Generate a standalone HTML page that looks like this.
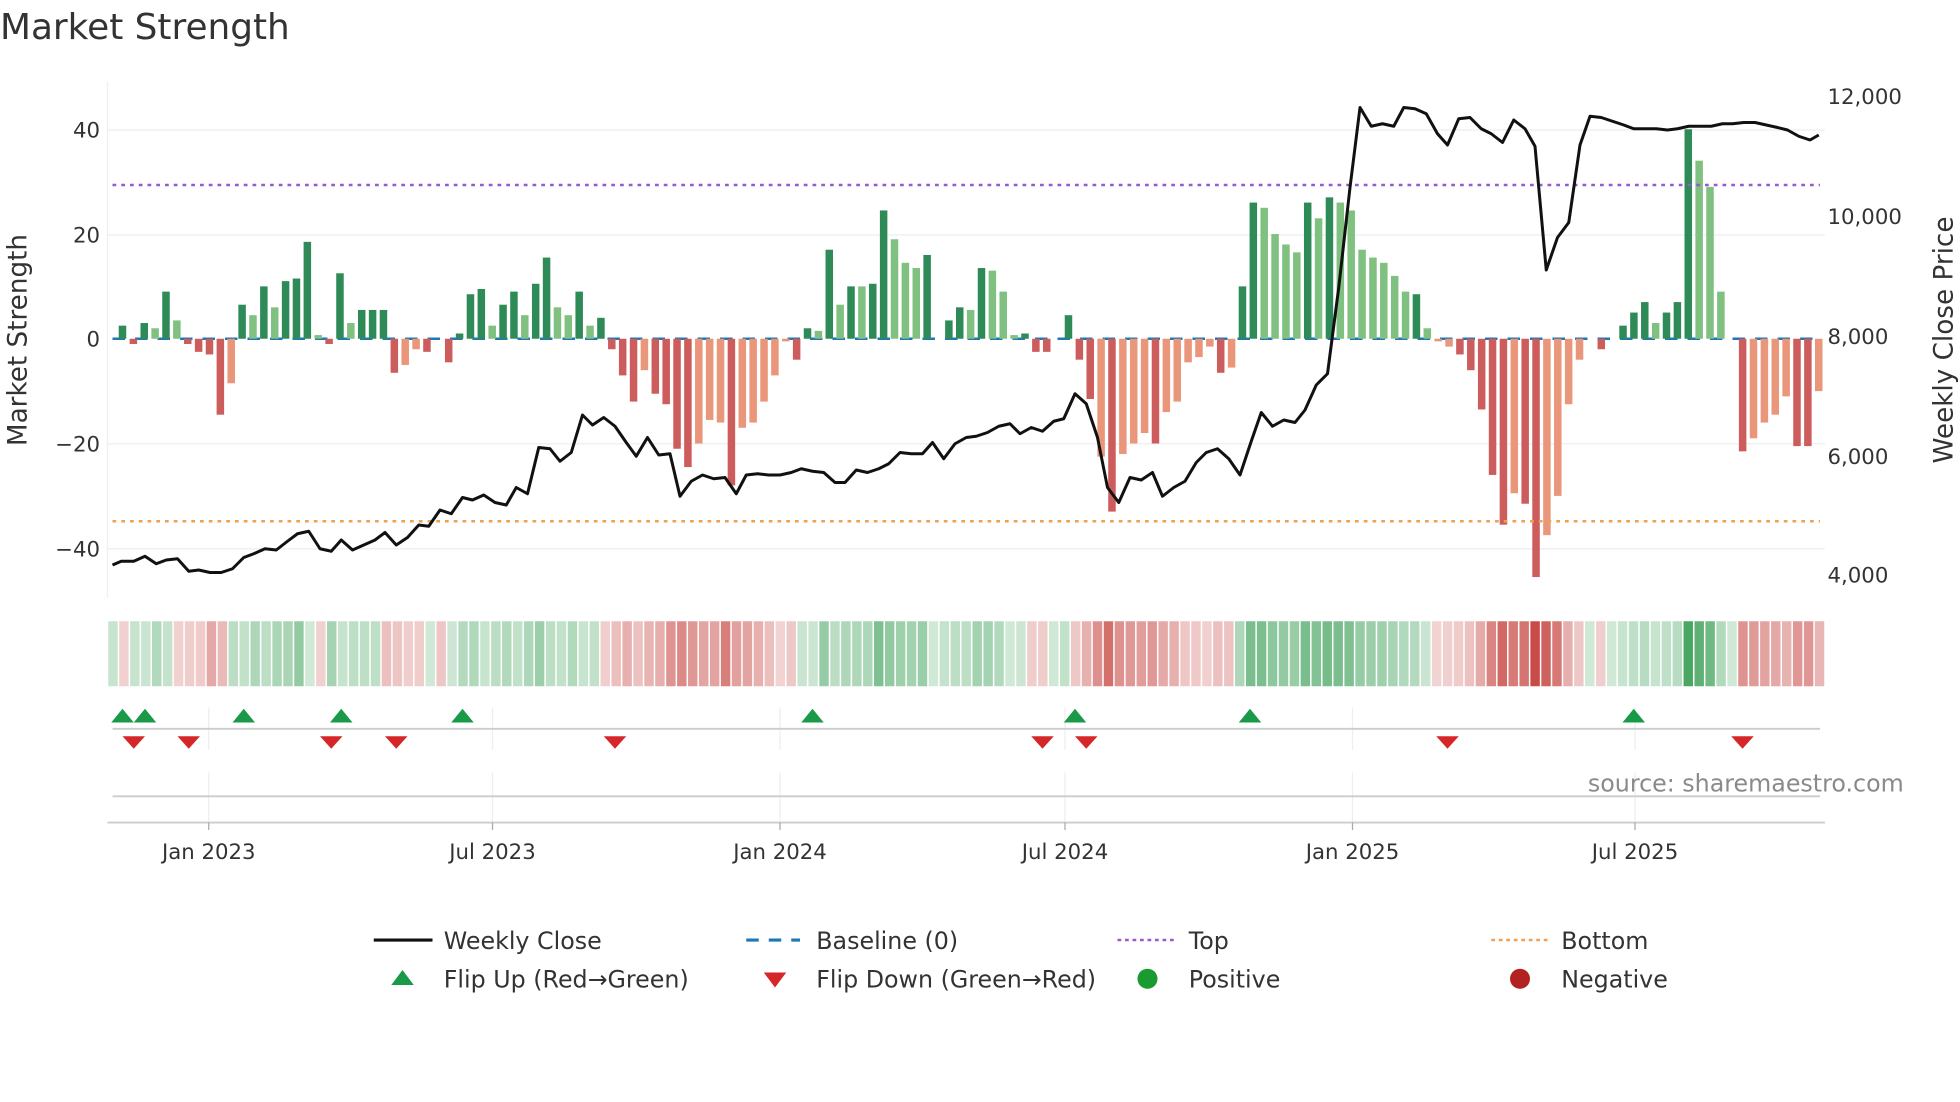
<!DOCTYPE html>
<html><head><meta charset="utf-8"><style>
html,body{margin:0;padding:0;background:#fff;width:1960px;height:1102px;overflow:hidden}
svg{display:block}
text{font-family:"DejaVu Sans","Liberation Sans",sans-serif;fill:#333}
</style></head><body>
<svg id="s" width="1960" height="1102" viewBox="0 0 1568 881.6" xmlns="http://www.w3.org/2000/svg">
<text x="0" y="31" font-size="28.7" fill="#333">Market Strength</text>
<g id="grid" stroke="#eceef2" stroke-width="1">
<line x1="86" x2="1460" y1="104" y2="104"/><line x1="86" x2="1460" y1="188" y2="188"/>
<line x1="86" x2="1460" y1="355" y2="355"/><line x1="86" x2="1460" y1="439" y2="439"/>
</g>
<line x1="86" x2="86" y1="65" y2="478" stroke="#f0f0f0"/>
<g id="bars"></g>
<line x1="90" x2="1456" y1="148" y2="148" stroke="#9b59d0" stroke-width="2" stroke-dasharray="3,4"/>
<line x1="90" x2="1456" y1="417" y2="417" stroke="#f0a050" stroke-width="2" stroke-dasharray="3,4"/>
<polyline id="price" fill="none" stroke="#111" stroke-width="2.4" stroke-linejoin="round"/>
<g font-size="17" text-anchor="end">
<text x="80" y="110">40</text><text x="80" y="194">20</text><text x="80" y="277">0</text>
<text x="80" y="361">−20</text><text x="80" y="445">−40</text>
</g>
<g font-size="17">
<text x="1462" y="83">12,000</text><text x="1462" y="179">10,000</text><text x="1462" y="275">8,000</text>
<text x="1462" y="371">6,000</text><text x="1462" y="466">4,000</text>
</g>
<text transform="translate(21,272) rotate(-90)" font-size="21" text-anchor="middle">Market Strength</text>
<text transform="translate(1562,272) rotate(-90)" font-size="21" text-anchor="middle">Weekly Close Price</text>
<g id="heat"></g>
<g stroke="#eceef2">
<line x1="167" x2="167" y1="566" y2="600"/><line x1="394" x2="394" y1="566" y2="600"/><line x1="624" x2="624" y1="566" y2="600"/><line x1="852" x2="852" y1="566" y2="600"/><line x1="1082" x2="1082" y1="566" y2="600"/><line x1="1308" x2="1308" y1="566" y2="600"/>
<line x1="167" x2="167" y1="618" y2="658"/><line x1="394" x2="394" y1="618" y2="658"/><line x1="624" x2="624" y1="618" y2="658"/><line x1="852" x2="852" y1="618" y2="658"/><line x1="1082" x2="1082" y1="618" y2="658"/><line x1="1308" x2="1308" y1="618" y2="658"/>
</g>
<line x1="90" x2="1456" y1="583" y2="583" stroke="#ccc" stroke-width="1.5"/>
<line x1="90" x2="1456" y1="637" y2="637" stroke="#ccc" stroke-width="1.5"/>
<line x1="86" x2="1460" y1="658" y2="658" stroke="#ccc" stroke-width="1.5"/>
<g stroke="#aaa"><line x1="167" x2="167" y1="658" y2="664"/><line x1="394" x2="394" y1="658" y2="664"/><line x1="624" x2="624" y1="658" y2="664"/><line x1="852" x2="852" y1="658" y2="664"/><line x1="1082" x2="1082" y1="658" y2="664"/><line x1="1308" x2="1308" y1="658" y2="664"/></g>
<g id="marks"></g>
<text x="1523" y="633" font-size="19" fill="#8a8a8a" text-anchor="end" style="fill:#8a8a8a">source: sharemaestro.com</text>
<g font-size="17" text-anchor="middle">
<text x="167" y="687">Jan 2023</text><text x="394" y="687">Jul 2023</text><text x="624" y="687">Jan 2024</text>
<text x="852" y="687">Jul 2024</text><text x="1082" y="687">Jan 2025</text><text x="1308" y="687">Jul 2025</text>
</g>
<g font-size="19">
<line x1="299" x2="346" y1="752" y2="752" stroke="#111" stroke-width="2.5"/><text x="355" y="759">Weekly Close</text>
<line x1="597" x2="640" y1="752" y2="752" stroke="#1f77b4" stroke-width="2.5" stroke-dasharray="10,8"/><text x="653" y="759">Baseline (0)</text>
<line x1="894" x2="940" y1="752" y2="752" stroke="#9b59d0" stroke-width="2" stroke-dasharray="3,3"/><text x="951" y="759">Top</text>
<line x1="1193" x2="1238" y1="752" y2="752" stroke="#f0a050" stroke-width="2" stroke-dasharray="3,3"/><text x="1249" y="759">Bottom</text>
<polygon points="313,788 331,788 322,776" fill="#1a9a48"/><text x="355" y="790">Flip Up (Red→Green)</text>
<polygon points="611,778 629,778 620,790" fill="#d62728"/><text x="653" y="790">Flip Down (Green→Red)</text>
<circle cx="918" cy="783" r="8" fill="#1a9a30"/><text x="951" y="790">Positive</text>
<circle cx="1216" cy="783" r="8" fill="#b22222"/><text x="1249" y="790">Negative</text>
</g>
</svg>
<script>
var NS="http://www.w3.org/2000/svg";
function el(t,a,p){var e=document.createElementNS(NS,t);for(var k in a)e.setAttribute(k,a[k]);p.appendChild(e);return e;}
var raw="2.5d,-1d,3d,2l,9d,3.5l,-1d,-2.5d,-3d,-14.5d,-8.5l,6.5d,4.5l,10d,6l,11d,11.5d,18.5d,0.7l,-1d,12.5d,3l,5.5d,5.5d,5.5d,-6.5d,-5l,-2l,-2.5d,0d,-4.5d,1d,8.5d,9.5d,2.5l,6.5d,9d,4.5l,10.5d,15.5d,6l,4.5l,9d,2.5l,4d,-2d,-7d,-12d,-6l,-10.5d,-12.5d,-21d,-24.5d,-20l,-15.5l,-16l,-28d,-17l,-16l,-12l,-7l,-0.5l,-4d,2d,1.5l,17d,6.5l,10d,10l,10.5d,24.5d,19l,14.5l,13.5l,16d,0d,3.5d,6d,5.5l,13.5d,13l,9l,0.7l,1d,-2.5d,-2.5d,0d,4.5d,-4d,-11.5d,-22.5l,-33d,-22l,-20l,-18l,-20d,-14l,-12l,-4.5l,-3.5l,-1.5l,-6.5d,-5.5l,10d,26d,25l,20l,18l,16.5l,26d,23l,27d,26l,24.5l,17l,15.5l,14.5l,12l,9l,8.5d,2l,-0.5l,-1.5l,-3d,-6d,-13.5d,-26d,-35.5d,-29.5l,-31.5d,-45.5d,-37.5l,-30l,-12.5l,-4l,0d,-2d,0d,2.5d,5d,7d,3l,5d,7d,40d,34l,29l,9l,0d,-21.5d,-19l,-16l,-14.5l,-11l,-20.5d,-20.5d,-10l".split(",");
var n=raw.length,x0=98,x1=1455,dx=(x1-x0)/(n-1),y0=271,k=4.19;
var hw=(1460-86)/n;
var bars=document.getElementById("bars"),heat=document.getElementById("heat");
el("line",{x1:90,x2:1456,y1:y0,y2:y0,stroke:"#1f77b4","stroke-width":2,"stroke-dasharray":"10,8"},bars);
for(var i=0;i<n;i++){var v=parseFloat(raw[i]),d=raw[i].slice(-1)=="d",x=x0+i*dx;
 var c=v>=0?(d?"#2e8b57":"#80c080"):(d?"#cd5c5c":"#e9967a");
 if(Math.abs(v)>0.2){var h=Math.abs(v)*k;el("rect",{x:x-3,y:v>=0?y0-h:y0,width:6,height:h,fill:c},bars);}
 var a=0.22+0.7*Math.min(Math.abs(v)/45,1);
 var hc=v>=0?"rgba(40,150,70,"+a+")":"rgba(195,60,55,"+a+")";
 if(v>=0&&Math.abs(v)<1)hc="rgba(40,150,70,0.22)";
 el("rect",{x:86+i*hw+0.6,y:497,width:hw-1.2,height:52,fill:hc},heat);}
var P=[90,452,97,449,107,449,116,445,125,451,133,448,142,447,151,457,159,456,168,458,177,458,186,455,195,446,203,443,212,439,221,440,230,433,238,427,247,425,256,439,265,441,273,432,282,440,291,436,300,432,308,426,317,436,326,430,335,420,343,421,352,408,361,411,370,398,378,400,387,396,396,402,405,404,413,390,422,395,431,358,440,359,448,369,457,362,466,332,474,340,483,334,492,341,501,354,509,365,518,350,527,364,536,363,544,397,553,385,562,380,571,383,580,382,589,395,597,380,606,379,615,380,624,380,633,378,641,375,650,377,659,378,668,386,676,386,685,376,694,378,703,375,711,371,720,362,729,363,738,363,746,354,755,367,764,355,773,350,781,349,790,346,799,341,808,339,816,347,825,342,834,345,843,337,851,335,860,315,869,323,878,350,886,390,895,402,904,382,913,384,922,378,930,397,939,390,948,385,957,370,965,362,974,359,983,367,992,380,1001,353,1009,330,1018,341,1027,336,1036,338,1044,328,1053,308,1062,299,1071,230,1080,150,1088,86,1097,101,1106,99,1115,101,1123,86,1132,87,1141,91,1150,107,1158,116,1167,95,1176,94,1185,103,1193,107,1202,114,1211,96,1220,103,1228,117,1237,216,1246,190,1255,178,1264,116,1272,93,1281,94,1290,97,1299,100,1307,103,1316,103,1325,103,1334,104,1342,103,1351,101,1360,101,1369,101,1378,99,1386,99,1395,98,1404,98,1413,100,1422,102,1430,104,1439,109,1448,112,1455,108];
var pts=[];for(var j=0;j<P.length;j+=2)pts.push(P[j]+","+P[j+1]);
document.getElementById("price").setAttribute("points",pts.join(" "));
var m=document.getElementById("marks");
[98,116,195,273,370,650,860,1000,1307].forEach(function(x){el("polygon",{points:(x-9)+",578 "+(x+9)+",578 "+x+",567",fill:"#1a9a48"},m);});
[107,151,265,317,492,834,869,1158,1394].forEach(function(x){el("polygon",{points:(x-9)+",589 "+(x+9)+",589 "+x+",599",fill:"#d62728"},m);});
</script>
</body></html>
